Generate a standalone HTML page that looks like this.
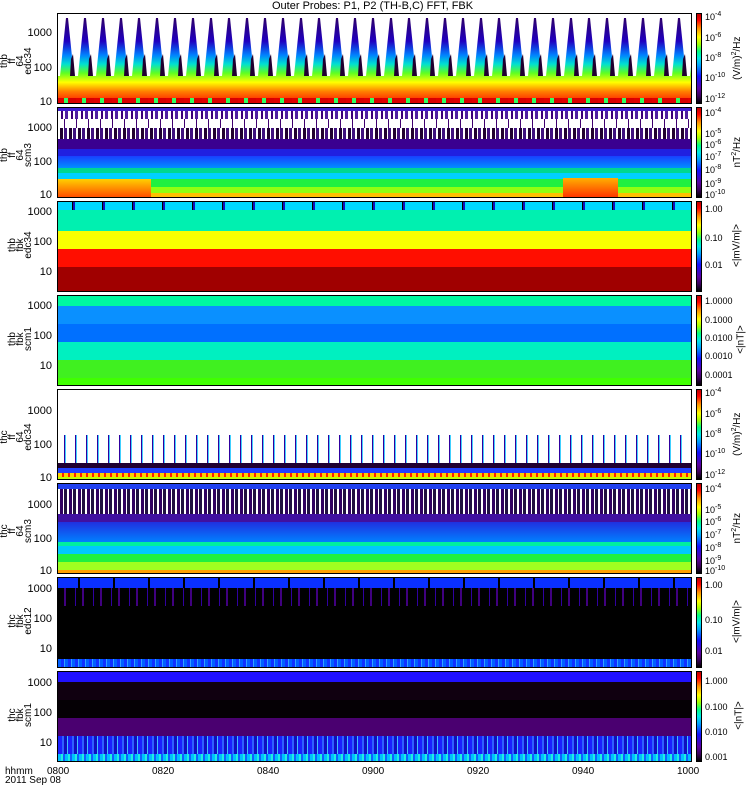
<!DOCTYPE html>
<html><head><meta charset="utf-8"><style>
*{margin:0;padding:0}
body{width:750px;height:800px;background:#fff;position:relative;overflow:hidden;font-family:"Liberation Sans",sans-serif;font-size:11px;color:#000}
.p{position:absolute;left:57px;width:635px;height:91px;border:1px solid #000;overflow:hidden;box-sizing:border-box}
.b{position:absolute;left:0;width:100%}
.cb{position:absolute;left:696px;width:6px;height:91px;border:1px solid #000;box-sizing:border-box;background:linear-gradient(to top,#000 0%,#3a005a 8%,#5a00a0 16%,#1010ff 30%,#00a0ff 42%,#00e8e8 50%,#00ff80 58%,#a0ff00 66%,#ffff00 74%,#ff9000 84%,#ff0000 93%,#c00000 100%)}
.t{position:absolute;font-size:9px;white-space:nowrap}
.yl{position:absolute;right:698px;font-size:11px;text-align:right}
.lab{position:absolute;width:90px;text-align:center;font-size:10px;line-height:8px;transform:rotate(-90deg);transform-origin:center}
.u{position:absolute;width:90px;text-align:center;font-size:10px;transform:rotate(-90deg)}
sup{font-size:7px}
</style></head><body>
<div class="t" style="left:272px;top:0;font-size:11px">Outer Probes: P1, P2 (TH-B,C) FFT, FBK</div>

<!-- Panel 1 -->
<div class="p" style="top:13px">
<svg width="635" height="91" style="position:absolute;left:0;top:0">
<defs>
<linearGradient id="g1" x1="0" y1="0" x2="0" y2="91" gradientUnits="userSpaceOnUse">
<stop offset="0" stop-color="#30005a"/><stop offset="0.3" stop-color="#2000c0"/><stop offset="0.45" stop-color="#0080ff"/><stop offset="0.55" stop-color="#00e0d0"/><stop offset="0.65" stop-color="#60ff20"/><stop offset="0.75" stop-color="#ffff00"/><stop offset="0.85" stop-color="#ff8000"/><stop offset="1" stop-color="#ff0000"/></linearGradient>
<pattern id="sp" width="18" height="91" patternUnits="userSpaceOnUse">
<rect width="18" height="91" fill="#fff"/>
<polygon points="8,4 10,4 16,62 2,62" fill="url(#g1)"/>
<polygon points="13,45 15,40 17,62 12,62" fill="#200030"/>
<rect x="0" y="62" width="18" height="22" fill="url(#g1)"/>
<rect x="0" y="84" width="6" height="7" fill="#e00000"/><rect x="6" y="84" width="4" height="7" fill="#30ff60"/><rect x="10" y="84" width="8" height="7" fill="#d80000"/>
</pattern></defs>
<rect width="635" height="91" fill="url(#sp)"/>
</svg></div>
<div class="cb" style="top:13px"></div>

<!-- Panel 2 -->
<div class="p" style="top:107px">
<div class="b" style="top:0;height:3px;background:#4020d0"></div>
<div class="b" style="top:3px;height:8px;background:repeating-linear-gradient(90deg,#fff 0 3px,#3a0078 3px 5px,#fff 5px 7px,#5020a0 7px 10px)"></div>
<div class="b" style="top:11px;height:9px;background:repeating-linear-gradient(90deg,#fff 0 6px,#400070 6px 7px,#fff 7px 12px)"></div>
<div class="b" style="top:20px;height:11px;background:repeating-linear-gradient(90deg,#fff 0 2px,#200030 2px 5px,#fff 5px 6px,#401080 6px 9px)"></div>
<div class="b" style="top:31px;height:10px;background:#3a0090"></div>
<div class="b" style="top:41px;height:7px;background:#2020e0"></div>
<div class="b" style="top:48px;height:12px;background:linear-gradient(#1840ff,#0090ff)"></div>
<div class="b" style="top:60px;height:5px;background:#00d890"></div>
<div class="b" style="top:65px;height:6px;background:#00d0ff"></div>
<div class="b" style="top:71px;height:8px;background:#20f040"></div>
<div class="b" style="top:79px;height:6px;background:#90ff10"></div>
<div class="b" style="top:85px;height:6px;background:#ffc000"></div>
<div style="position:absolute;left:0;top:71px;width:93px;height:20px;background:linear-gradient(#ffd000,#ff4000)"></div>
<div style="position:absolute;left:505px;top:70px;width:55px;height:20px;background:linear-gradient(#ffb000,#ff3000)"></div>
</div>
<div class="cb" style="top:107px"></div>

<!-- Panel 3 -->
<div class="p" style="top:201px">
<div class="b" style="top:0;height:8px;background:repeating-linear-gradient(90deg,#00d8ff 0 14px,#000 14px 15px,#1010c0 15px 17px,#00d8ff 17px 30px)"></div>
<div class="b" style="top:8px;height:21px;background:#00f0b0"></div>
<div class="b" style="top:29px;height:18px;background:#f8ff00"></div>
<div class="b" style="top:47px;height:18px;background:#ff0e00"></div>
<div class="b" style="top:65px;height:26px;background:#a00000"></div>
</div>
<div class="cb" style="top:201px"></div>

<!-- Panel 4 -->
<div class="p" style="top:295px">
<div class="b" style="top:0;height:10px;background:#00f8a0"></div>
<div class="b" style="top:10px;height:18px;background:#0a90ff"></div>
<div class="b" style="top:28px;height:18px;background:#0070ff"></div>
<div class="b" style="top:46px;height:18px;background:#00f0c0"></div>
<div class="b" style="top:64px;height:18px;background:#40f020"></div>
<div class="b" style="top:82px;height:9px;background:#40ff00"></div>
</div>
<div class="cb" style="top:295px"></div>

<!-- Panel 5 -->
<div class="p" style="top:389px">
<div class="b" style="top:45px;height:28px;background:repeating-linear-gradient(90deg,#fff 0 6px,#3000a0 6px 7px,#40d0ff 7px 8px,#fff 8px 11px)"></div>
<div class="b" style="top:73px;height:5px;background:#200030"></div>
<div class="b" style="top:78px;height:5px;background:#2040ff"></div>
<div class="b" style="top:83px;height:4px;background:repeating-linear-gradient(90deg,#ffd000 0 4px,#ff2000 4px 6px)"></div>
<div class="b" style="top:87px;height:4px;background:#c0ff00"></div>
</div>
<div class="cb" style="top:389px"></div>

<!-- Panel 6 -->
<div class="p" style="top:483px">
<div class="b" style="top:0;height:5px;background:#2040f0"></div>
<div class="b" style="top:5px;height:25px;background:repeating-linear-gradient(90deg,#fff 0 2px,#300060 2px 5px,#fff 5px 6px,#201040 6px 9px)"></div>
<div class="b" style="top:30px;height:8px;background:#4010a0"></div>
<div class="b" style="top:38px;height:20px;background:linear-gradient(#2030e0,#0080ff)"></div>
<div class="b" style="top:58px;height:4px;background:#00f0a0"></div>
<div class="b" style="top:62px;height:8px;background:#00c8ff"></div>
<div class="b" style="top:70px;height:8px;background:#20f040"></div>
<div class="b" style="top:78px;height:8px;background:#a0ff20"></div>
<div class="b" style="top:86px;height:5px;background:#ffa000"></div>
</div>
<div class="cb" style="top:483px"></div>

<!-- Panel 7 -->
<div class="p" style="top:577px;background:#000">
<div class="b" style="top:0;height:10px;background:repeating-linear-gradient(90deg,#0a30ff 0 20px,#000 20px 22px,#0a30ff 22px 35px)"></div>
<div class="b" style="top:10px;height:18px;background:repeating-linear-gradient(90deg,#000 0 6px,#400080 6px 8px,#000 8px 17px,#3000a0 17px 18px)"></div>
<div class="b" style="top:81px;height:10px;background:repeating-linear-gradient(90deg,#0060ff 0 3px,#1030ff 3px 6px,#30a0ff 6px 7px)"></div>
</div>
<div class="cb" style="top:577px"></div>

<!-- Panel 8 -->
<div class="p" style="top:671px;background:#000">
<div class="b" style="top:0;height:10px;background:#2010ff"></div>
<div class="b" style="top:10px;height:18px;background:#100010"></div>
<div class="b" style="top:28px;height:18px;background:#050005"></div>
<div class="b" style="top:46px;height:18px;background:#4a0070"></div>
<div class="b" style="top:64px;height:18px;background:repeating-linear-gradient(90deg,#1a20ff 0 4px,#3060ff 4px 6px,#1010c0 6px 9px,#40c0ff 9px 10px)"></div>
<div class="b" style="top:82px;height:9px;background:repeating-linear-gradient(90deg,#00c0ff 0 3px,#20f0e0 3px 5px,#1060ff 5px 7px)"></div>
</div>
<div class="cb" style="top:671px"></div>

<!-- y labels -->
<div class="yl" style="top:27px">1000</div><div class="yl" style="top:62px">100</div><div class="yl" style="top:96px">10</div>
<div class="yl" style="top:122px">1000</div><div class="yl" style="top:156px">100</div><div class="yl" style="top:189px">10</div>
<div class="yl" style="top:206px">1000</div><div class="yl" style="top:236px">100</div><div class="yl" style="top:266px">10</div>
<div class="yl" style="top:300px">1000</div><div class="yl" style="top:330px">100</div><div class="yl" style="top:360px">10</div>
<div class="yl" style="top:405px">1000</div><div class="yl" style="top:439px">100</div><div class="yl" style="top:472px">10</div>
<div class="yl" style="top:499px">1000</div><div class="yl" style="top:533px">100</div><div class="yl" style="top:565px">10</div>
<div class="yl" style="top:583px">1000</div><div class="yl" style="top:613px">100</div><div class="yl" style="top:643px">10</div>
<div class="yl" style="top:677px">1000</div><div class="yl" style="top:707px">100</div><div class="yl" style="top:737px">10</div>

<!-- left labels -->
<div class="lab" style="left:-28px;top:45px">thb<br>ff<br>64<br>edc34</div>
<div class="lab" style="left:-28px;top:139px">thb<br>ff<br>64<br>scm3</div>
<div class="lab" style="left:-24px;top:233px">thb<br>fbk<br>edc34</div>
<div class="lab" style="left:-24px;top:327px">thb<br>fbk<br>scm1</div>
<div class="lab" style="left:-28px;top:421px">thc<br>ff<br>64<br>edc34</div>
<div class="lab" style="left:-28px;top:515px">thc<br>ff<br>64<br>scm3</div>
<div class="lab" style="left:-24px;top:609px">thc<br>fbk<br>edc12</div>
<div class="lab" style="left:-24px;top:703px">thc<br>fbk<br>scm1</div>

<!-- colorbar ticks -->
<div class="t" style="left:705px;top:11px">10<sup>-4</sup></div><div class="t" style="left:705px;top:32px">10<sup>-6</sup></div><div class="t" style="left:705px;top:52px">10<sup>-8</sup></div><div class="t" style="left:705px;top:72px">10<sup>-10</sup></div><div class="t" style="left:705px;top:93px">10<sup>-12</sup></div>
<div class="t" style="left:705px;top:107px">10<sup>-4</sup></div><div class="t" style="left:705px;top:128px">10<sup>-5</sup></div><div class="t" style="left:705px;top:139px">10<sup>-6</sup></div><div class="t" style="left:705px;top:151px">10<sup>-7</sup></div><div class="t" style="left:705px;top:164px">10<sup>-8</sup></div><div class="t" style="left:705px;top:178px">10<sup>-9</sup></div><div class="t" style="left:705px;top:189px">10<sup>-10</sup></div>
<div class="t" style="left:705px;top:204px">1.00</div><div class="t" style="left:705px;top:233px">0.10</div><div class="t" style="left:705px;top:260px">0.01</div>
<div class="t" style="left:705px;top:296px">1.0000</div><div class="t" style="left:705px;top:315px">0.1000</div><div class="t" style="left:705px;top:333px">0.0100</div><div class="t" style="left:705px;top:351px">0.0010</div><div class="t" style="left:705px;top:370px">0.0001</div>
<div class="t" style="left:705px;top:387px">10<sup>-4</sup></div><div class="t" style="left:705px;top:408px">10<sup>-6</sup></div><div class="t" style="left:705px;top:428px">10<sup>-8</sup></div><div class="t" style="left:705px;top:448px">10<sup>-10</sup></div><div class="t" style="left:705px;top:469px">10<sup>-12</sup></div>
<div class="t" style="left:705px;top:483px">10<sup>-4</sup></div><div class="t" style="left:705px;top:504px">10<sup>-5</sup></div><div class="t" style="left:705px;top:516px">10<sup>-6</sup></div><div class="t" style="left:705px;top:529px">10<sup>-7</sup></div><div class="t" style="left:705px;top:542px">10<sup>-8</sup></div><div class="t" style="left:705px;top:555px">10<sup>-9</sup></div><div class="t" style="left:705px;top:565px">10<sup>-10</sup></div>
<div class="t" style="left:705px;top:580px">1.00</div><div class="t" style="left:705px;top:615px">0.10</div><div class="t" style="left:705px;top:646px">0.01</div>
<div class="t" style="left:705px;top:676px">1.000</div><div class="t" style="left:705px;top:702px">0.100</div><div class="t" style="left:705px;top:727px">0.010</div><div class="t" style="left:705px;top:752px">0.001</div>

<!-- units -->
<div class="u" style="left:692px;top:52px">(V/m)<sup>2</sup>/Hz</div>
<div class="u" style="left:692px;top:146px">nT<sup>2</sup>/Hz</div>
<div class="u" style="left:692px;top:240px">&lt;|mV/m|&gt;</div>
<div class="u" style="left:696px;top:334px">&lt;|nT|&gt;</div>
<div class="u" style="left:692px;top:428px">(V/m)<sup>2</sup>/Hz</div>
<div class="u" style="left:692px;top:522px">nT<sup>2</sup>/Hz</div>
<div class="u" style="left:692px;top:616px">&lt;|mV/m|&gt;</div>
<div class="u" style="left:694px;top:710px">&lt;|nT|&gt;</div>

<!-- x axis -->
<div class="t" style="left:5px;top:766px;font-size:10px">hhmm</div>
<div class="t" style="left:5px;top:775px;font-size:10px">2011 Sep 08</div>
<div class="t" style="left:47px;top:766px;font-size:10px">0800</div>
<div class="t" style="left:152px;top:766px;font-size:10px">0820</div>
<div class="t" style="left:257px;top:766px;font-size:10px">0840</div>
<div class="t" style="left:362px;top:766px;font-size:10px">0900</div>
<div class="t" style="left:467px;top:766px;font-size:10px">0920</div>
<div class="t" style="left:572px;top:766px;font-size:10px">0940</div>
<div class="t" style="left:677px;top:766px;font-size:10px">1000</div>
</body></html>
